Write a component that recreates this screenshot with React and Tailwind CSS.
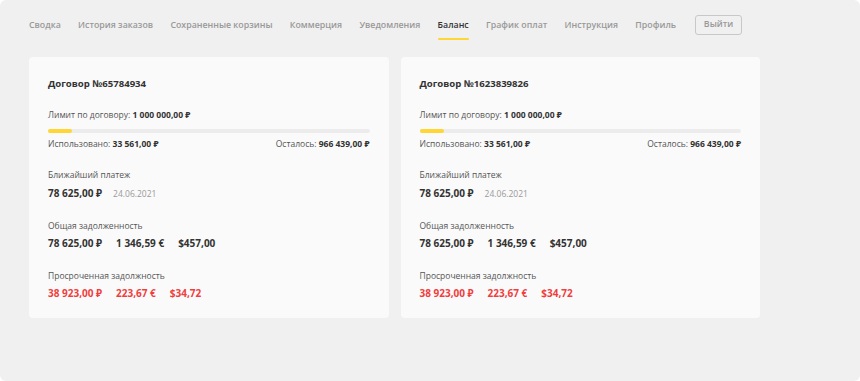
import React from "react";

const navItems = [
  "Сводка",
  "История заказов",
  "Сохраненные корзины",
  "Коммерция",
  "Уведомления",
  "Баланс",
  "График оплат",
  "Инструкция",
  "Профиль",
];

function Card({ num }) {
  return (
    <div className="flex-1 bg-[#fafafa] rounded-[4px] px-[19px] pt-[19px] pb-[18px]">
      <div className="text-[9.6px] leading-[15px] font-bold text-[#333]">Договор №{num}</div>
      <div className="mt-[18px] text-[8.5px] leading-[12px] text-[#555]">
        Лимит по договору: <span className="font-bold text-[#333]">1 000 000,00 ₽</span>
      </div>
      <div className="mt-[8px] h-[4px] rounded-full bg-[#ececec]">
        <div className="h-[4px] w-[24px] rounded-full bg-[#ffd633]" />
      </div>
      <div className="mt-[5px] flex justify-between text-[8.5px] leading-[12px] text-[#555]">
        <div>
          Использовано: <span className="font-bold text-[#333]">33 561,00 ₽</span>
        </div>
        <div>
          Осталось: <span className="font-bold text-[#333]">966 439,00 ₽</span>
        </div>
      </div>
      <div className="mt-[19px] text-[8.5px] leading-[12px] text-[#555]">Ближайший платеж</div>
      <div className="mt-[5px] flex items-baseline gap-[11px] leading-[14px]">
        <span className="text-[10px] font-bold text-[#333]">78 625,00 ₽</span>
        <span className="text-[8.5px] text-[#999]">24.06.2021</span>
      </div>
      <div className="mt-[19px] text-[8.5px] leading-[12px] text-[#555]">Общая задолженность</div>
      <div className="mt-[4px] flex gap-[14px] text-[10px] leading-[14px] font-bold text-[#333]">
        <span>78 625,00 ₽</span>
        <span>1 346,59 €</span>
        <span>$457,00</span>
      </div>
      <div className="mt-[20px] text-[8.5px] leading-[12px] text-[#555]">Просроченная задолжность</div>
      <div className="mt-[4px] flex gap-[14px] text-[10px] leading-[14px] font-bold text-[#f03e3e]">
        <span>38 923,00 ₽</span>
        <span>223,67 €</span>
        <span>$34,72</span>
      </div>
    </div>
  );
}

export default function App() {
  return (
    <div className="w-[860px] h-[381px] bg-white" style={{ fontFamily: '"Open Sans", "Noto Sans", sans-serif' }}>
      <div className="w-full h-full bg-[#f0f0f0] rounded-[6px] px-[29px] pt-[15px]">
        <div className="flex items-center h-[20px]">
          <div className="flex items-center gap-[17.3px]">
            {navItems.map((item) => (
              <div
                key={item}
                className={
                  "relative text-[8.8px] leading-[13px] font-semibold " +
                  (item === "Баланс" ? "text-[#333]" : "text-[#999]")
                }
              >
                {item}
                {item === "Баланс" && (
                  <div className="absolute left-0 right-0 top-[19px] h-[2px] bg-[#ffd633] rounded-full" />
                )}
              </div>
            ))}
          </div>
          <button className="ml-[19px] h-[20px] w-[47px] rounded-[3px] border border-[#c8c8c8] text-[8.8px] font-semibold text-[#999] flex items-center justify-center">
            Выйти
          </button>
        </div>
        <div className="mt-[22px] flex gap-[12px] w-[731px]">
          <Card num="65784934" />
          <Card num="1623839826" />
        </div>
      </div>
    </div>
  );
}
